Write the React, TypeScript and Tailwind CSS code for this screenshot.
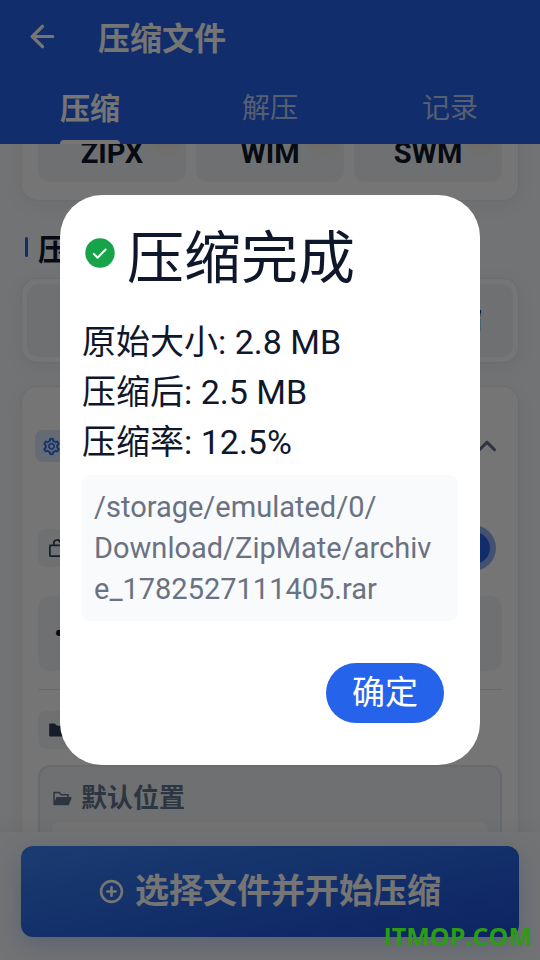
import { useState } from "react";
import type { ReactNode } from "react";
import { ArrowLeft, ChevronUp, CirclePlus } from "lucide-react";
import { AiFillFolder, AiFillFolderOpen, AiOutlineSetting } from "react-icons/ai";
import clsx from "clsx";

const TABS = ["压缩", "解压", "记录"];
const FORMATS = ["ZIPX", "WIM", "SWM"];
const STORAGE_ROOT = "/storage/emulated/0/";
const ARCHIVE_PATH = "Download/ZipMate/archive_1782527111405.rar";

function LockOpenIcon() {
  return (
    <svg viewBox="0 0 16 18" width="16" height="18" fill="none" stroke="currentColor" strokeWidth="1.7" aria-hidden="true">
      <rect x="0.9" y="6.4" width="14.2" height="10.7" rx="0.6" />
      <path d="M4.8 6.4V4.2a3.2 3.2 0 0 1 6.3-.8" />
    </svg>
  );
}

function Header() {
  return (
    <header className="z-10 shrink-0 bg-[#2563eb] font-['Noto_Sans_CJK_SC',sans-serif] text-white">
      <div className="flex h-18 items-center px-6">
        <button aria-label="返回" className="flex h-9 w-9 items-center justify-center">
          <ArrowLeft size={35} strokeWidth={2.2} />
        </button>
        <h1 className="ml-[38px] text-[32px] font-bold leading-[72px]">压缩文件</h1>
      </div>
      <nav className="grid h-18 grid-cols-3">
        {TABS.map((tab, i) => (
          <button key={tab} className="flex flex-col items-center">
            <span
              className={clsx(
                "flex h-17 items-center leading-10",
                i === 0 ? "text-[30px] font-bold" : "text-[28px] text-white/70"
              )}
            >
              {tab}
            </span>
            {i === 0 && <span className="h-1 w-15 rounded-t bg-white" />}
          </button>
        ))}
      </nav>
    </header>
  );
}

function Card({ className, children }: { className?: string; children: ReactNode }) {
  return (
    <section
      className={clsx(
        "rounded-2xl border border-slate-200/80 bg-white shadow-[0_4px_20px_rgba(15,23,42,0.05)]",
        className
      )}
    >
      {children}
    </section>
  );
}

function IconBox({ children }: { children: ReactNode }) {
  return (
    <span className="flex h-[38px] w-[38px] items-center justify-center rounded-lg bg-slate-100 text-slate-700">
      {children}
    </span>
  );
}

function Options() {
  const [encrypt, setEncrypt] = useState(true);

  return (
    <main className="min-h-0 flex-1 overflow-hidden px-[21px]">
      {/* Formats, scrolled partly under the header */}
      <Card className="-mt-[35px] grid grid-cols-3 gap-2.5 p-4 pb-[18px]">
        {FORMATS.map((format) => (
          <button
            key={format}
            className="relative flex h-14 items-center justify-center rounded-xl bg-slate-100 text-[29px] font-bold text-slate-900"
          >
            {format}
            <span className="absolute right-1 top-0.5 h-6 w-8 rounded-full bg-orange-300/15 blur-xs" />
          </button>
        ))}
      </Card>

      <h2 className="mt-7 flex h-9 items-center font-['Noto_Sans_CJK_SC',sans-serif] text-[30px] font-bold leading-9 text-slate-900">
        <span className="ml-1 mr-2.5 h-5 w-[3px] rounded-full bg-[#2563eb]" />
        压缩级别
      </h2>

      <Card className="mt-[13px] p-[5px]">
        <div className="grid h-[73px] grid-cols-3 rounded-xl bg-slate-100 text-[25px] text-slate-900">
          <button>快速</button>
          <button>标准</button>
          <button>极限压缩</button>
        </div>
      </Card>

      <Card className="mt-[23px] px-4">
        <button className="flex h-[118px] w-full items-center justify-between" aria-label="高级选项">
          <span className="-ml-[3px] flex h-8 w-8 items-center justify-center rounded-lg bg-blue-100 text-[#2563eb]">
            <AiOutlineSetting size={19} strokeWidth={30} />
          </span>
          <ChevronUp size={30} strokeWidth={2.5} className="text-slate-500" />
        </button>

        <div className="mt-5 flex h-[46px] items-center justify-between">
          <IconBox>
            <LockOpenIcon />
          </IconBox>
          <label className="relative mr-1.5 flex h-[46px] w-20 items-center justify-end rounded-full bg-[#2563eb]/50 px-1.5">
            <input
              type="checkbox"
              aria-label="加密"
              checked={encrypt}
              onChange={(e) => setEncrypt(e.target.checked)}
              className="absolute inset-0 opacity-0"
            />
            <span className="h-8 w-8 rounded-full bg-[#2563eb]" />
          </label>
        </div>

        <input
          type="password"
          aria-label="密码"
          defaultValue="123456"
          className="mt-[25px] h-[75px] w-full rounded-xl bg-slate-100 px-4 text-[30px] text-slate-900"
        />

        <hr className="mt-[18px] border-slate-200" />

        <div className="mt-[21px]">
          <IconBox>
            <AiFillFolder size={20} />
          </IconBox>
        </div>

        <div className="mt-4 rounded-xl border-2 border-slate-200 bg-slate-100 px-3 pt-[11px]">
          <div className="flex h-10 items-center gap-2 text-[26px] font-bold text-slate-500">
            <AiFillFolderOpen size={21} />
            默认位置
          </div>
          <div className="mt-1 h-16 rounded-lg bg-white" />
        </div>
      </Card>
    </main>
  );
}

function ResultDialog() {
  return (
    <div
      role="dialog"
      aria-labelledby="result-title"
      className="w-full max-w-[420px] rounded-[42px] bg-white px-[22px] pb-[42px] pt-[18px] text-slate-900"
    >
      <h2
        id="result-title"
        className="flex h-20 items-center gap-3 font-['Noto_Sans_CJK_SC',sans-serif] text-[57px] leading-[80px]"
      >
        <svg viewBox="0 0 30 30" className="ml-[3px] h-[30px] w-[30px] shrink-0" aria-hidden="true">
          <circle cx="15" cy="15" r="14.7" fill="#16a34a" />
          <path
            d="M8.8 15.9l3.8 3.8 8-8.2"
            fill="none"
            stroke="white"
            strokeWidth="2"
            strokeLinecap="round"
            strokeLinejoin="round"
          />
        </svg>
        压缩完成
      </h2>

      <div className="mt-6 text-[34px] leading-[50px]">
        <p>原始大小: 2.8 MB</p>
        <p>压缩后: 2.5 MB</p>
        <p>压缩率: 12.5%</p>
      </div>

      <p className="mt-2 break-all rounded-lg bg-slate-50 px-3 pb-[11px] pt-3 text-[29px] leading-[41px] text-gray-500">
        <span className="block">{STORAGE_ROOT}</span>
        {ARCHIVE_PATH}
      </p>

      <div className="mt-[42px] flex justify-end pr-3.5">
        <button className="h-15 rounded-full bg-[#2563eb] px-[26px] text-[33px] text-white">
          确定
        </button>
      </div>
    </div>
  );
}

export default function App() {
  return (
    <div className="relative flex h-screen flex-col overflow-hidden bg-slate-50 font-['Roboto','Noto_Sans_CJK_SC',sans-serif]">
      <Header />
      <Options />

      <footer className="z-10 shrink-0 bg-slate-50 px-[21px] pb-[23px] pt-3.5 shadow-[0_-4px_20px_rgba(15,23,42,0.06)]">
        <button className="flex h-[91px] w-full items-center justify-center gap-[11px] rounded-xl bg-linear-to-br from-[#3b82f6] to-[#1d4ed8] text-[34px] font-bold text-white shadow-[0_8px_24px_rgba(37,99,235,0.25)]">
          <CirclePlus size={25} strokeWidth={2.5} />
          选择文件并开始压缩
        </button>
      </footer>

      <div className="absolute inset-0 z-20 flex items-center justify-center bg-black/54 px-15">
        <ResultDialog />
      </div>

      <span className="absolute bottom-[7px] right-2 z-30 font-['Open_Sans',sans-serif] text-[25px] font-bold leading-[34px] text-[#2c9b16]">
        ITMOP.COM
      </span>
    </div>
  );
}
